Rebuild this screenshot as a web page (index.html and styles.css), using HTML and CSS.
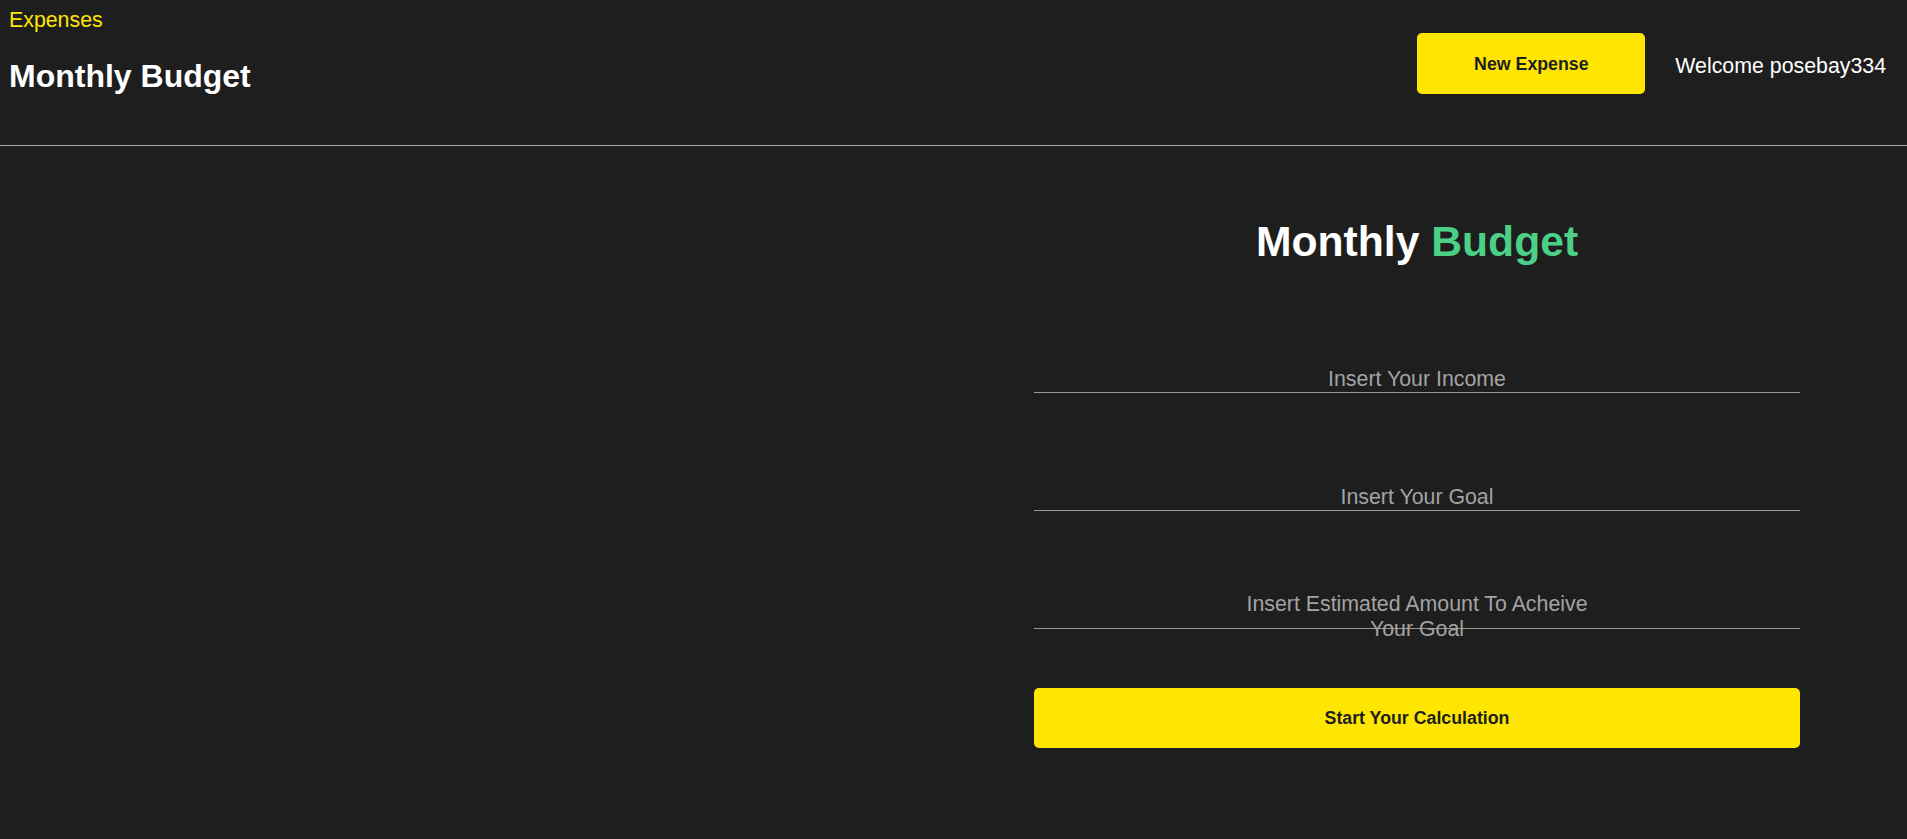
FILE: index.html
```html
<!DOCTYPE html>
<html lang="en">
<head>
<meta charset="utf-8">
<title>Monthly Budget</title>
<link rel="stylesheet" href="styles.css">
</head>
<body>
<header class="topbar">
  <div class="brand">
    <a class="nav-link" href="#">Expenses</a>
    <h2 class="page-title">Monthly Budget</h2>
  </div>
  <div class="actions">
    <button class="btn btn-header" type="button">New Expense</button>
    <span class="welcome">Welcome posebay334</span>
  </div>
</header>
<main class="layout">
  <section class="left-pane"></section>
  <section class="right-pane">
    <h1 class="budget-title">Monthly <span class="accent">Budget</span></h1>
    <form class="budget-form">
      <div class="field"><span class="placeholder">Insert Your Income</span></div>
      <div class="field"><span class="placeholder">Insert Your Goal</span></div>
      <div class="field field-multi"><span class="placeholder placeholder-wrap">Insert Estimated Amount To Acheive Your Goal</span></div>
      <button class="btn btn-submit" type="button">Start Your Calculation</button>
    </form>
  </section>
</main>
</body>
</html>
```
FILE: styles.css
```css
html, body {
  margin: 0;
  padding: 0;
  background: #1e1e1e;
  color: #ffffff;
  font-family: "Liberation Sans", Arial, sans-serif;
}

.topbar {
  display: flex;
  justify-content: space-between;
  align-items: flex-start;
  height: 145px;
  padding: 0 21px 0 9px;
  border-bottom: 1px solid #a8a8a8;
}

.brand {
  display: flex;
  flex-direction: column;
  align-items: flex-start;
  padding-top: 8px;
}

.nav-link {
  color: #ffe600;
  text-decoration: none;
  font-size: 21.33px;
}

.page-title {
  margin: 25px 0 0;
  font-size: 32px;
  font-weight: bold;
  color: #ffffff;
}

.actions {
  display: flex;
  align-items: center;
  gap: 30px;
  margin-top: 33px;
}

.btn {
  background: #ffe600;
  color: #1e1e1e;
  border: none;
  border-radius: 5px;
  font-family: "Liberation Sans", Arial, sans-serif;
  font-weight: bold;
  font-size: 17.78px;
  cursor: pointer;
}

.btn-header {
  width: 228px;
  height: 61px;
  padding-top: 2px;
}

.welcome {
  font-size: 21.33px;
  color: #ffffff;
  padding-top: 5px;
}

.layout {
  display: grid;
  grid-template-columns: 1fr 980px;
}

.right-pane {
  display: flex;
  flex-direction: column;
  align-items: center;
}

.budget-title {
  margin: 71px 0 0;
  font-size: 42.67px;
  font-weight: bold;
  color: #ffffff;
}

.accent {
  color: #4ccf86;
}

.budget-form {
  width: 766px;
  margin-top: 88px;
  display: flex;
  flex-direction: column;
  gap: 79px;
}

.field {
  height: 38px;
  border-bottom: 1px solid #9a9a9a;
  display: flex;
  justify-content: center;
  align-items: flex-end;
  text-align: center;
}

.field-multi {
  height: 36px;
  padding-top: 2px;
  align-items: flex-start;
}

.placeholder {
  font-size: 21.33px;
  color: #a3a3a3;
}

.placeholder-wrap {
  max-width: 360px;
  line-height: 25px;
}

.btn-submit {
  width: 100%;
  height: 60px;
  margin-top: -20px;
}
```
